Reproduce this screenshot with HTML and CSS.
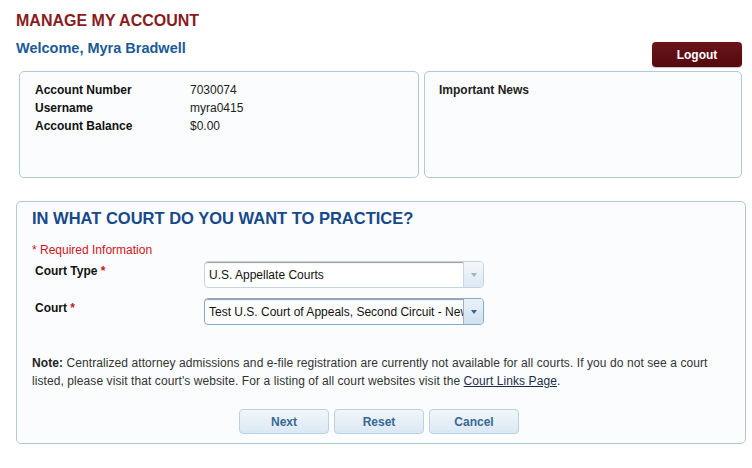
FILE: index.html
```html
<!DOCTYPE html>
<html lang="en">
<head>
<meta charset="utf-8">
<title>Manage My Account</title>
<link rel="stylesheet" href="styles.css">
</head>
<body>
<div class="page">
  <h1 class="title">MANAGE MY ACCOUNT</h1>
  <div class="welcome-row">
    <h2 class="welcome">Welcome, Myra Bradwell</h2>
    <button class="logout" type="button">Logout</button>
  </div>
  <div class="panels">
    <div class="panel account">
      <div class="info-row"><span class="info-label">Account Number</span><span class="info-value">7030074</span></div>
      <div class="info-row"><span class="info-label">Username</span><span class="info-value">myra0415</span></div>
      <div class="info-row"><span class="info-label">Account Balance</span><span class="info-value">$0.00</span></div>
    </div>
    <div class="panel news">
      <div class="news-title">Important News</div>
    </div>
  </div>
  <div class="court-box">
    <h2 class="court-heading">IN WHAT COURT DO YOU WANT TO PRACTICE?</h2>
    <div class="required">* Required Information</div>
    <div class="field-row">
      <label class="field-label">Court Type <span class="star">*</span></label>
      <div class="select disabled">
        <span class="select-text">U.S. Appellate Courts</span>
        <span class="select-btn"><span class="arrow"></span></span>
      </div>
    </div>
    <div class="field-row second">
      <label class="field-label">Court <span class="star">*</span></label>
      <div class="select active">
        <span class="select-text">Test U.S. Court of Appeals, Second Circuit - New York</span>
        <span class="select-btn"><span class="arrow"></span></span>
      </div>
    </div>
    <p class="note"><b>Note:</b> Centralized attorney admissions and e-file registration are currently not available for all courts. If you do not see a court listed, please visit that court's website. For a listing of all court websites visit the <a href="#" class="link">Court Links Page</a>.</p>
    <div class="actions">
      <button class="btn" type="button">Next</button>
      <button class="btn" type="button">Reset</button>
      <button class="btn" type="button">Cancel</button>
    </div>
  </div>
</div>
</body>
</html>
```
FILE: styles.css
```css
* { box-sizing: border-box; }
body {
  margin: 0;
  background: #ffffff;
  font-family: "Liberation Sans", Arial, sans-serif;
  color: #222;
}
.page {
  width: 752px;
  padding: 12px 6px 0 16px;
}
.title {
  margin: 0;
  font-size: 16px;
  line-height: 18px;
  font-weight: bold;
  color: #8a1b1d;
}
.welcome-row {
  display: flex;
  justify-content: space-between;
  align-items: flex-start;
  margin-top: 12px;
  padding-right: 4px;
}
.welcome {
  margin: -2px 0 0 0;
  font-size: 14.5px;
  line-height: 17px;
  font-weight: bold;
  color: #1b5a96;
}
.logout {
  width: 90px;
  height: 25px;
  border: 0;
  border-radius: 4px;
  background: linear-gradient(#6a1519, #55090e);
  box-shadow: 0 1px 1px rgba(0,0,0,0.25);
  color: #fff;
  font-family: "Liberation Sans", Arial, sans-serif;
  font-size: 12px;
  font-weight: bold;
  padding: 0;
}
.panels {
  display: flex;
  gap: 5px;
  margin: 4px 4px 0 3px;
}
.panel {
  height: 107px;
  border: 1px solid #afcad9;
  border-radius: 5px;
  background: #fafcfd;
  padding: 9px 15px;
  font-size: 12px;
  line-height: 18px;
}
.account { width: 400px; }
.news { flex: 1; padding-left: 14px; }
.info-row { display: flex; }
.info-label {
  width: 155px;
  font-weight: bold;
  color: #111;
}
.info-value { color: #222; }
.news-title { font-weight: bold; color: #222; }

.court-box {
  margin-top: 23px;
  border: 1px solid #afcad9;
  border-radius: 5px;
  background: #fbfcfd;
  padding: 6px 15px 9px 15px;
}
.court-heading {
  margin: 0;
  font-size: 16.5px;
  line-height: 20px;
  font-weight: bold;
  color: #17498a;
}
.required {
  margin-top: 13px;
  font-size: 12px;
  line-height: 18px;
  color: #d0141b;
}
.field-row {
  display: flex;
  margin-top: 2px;
}
.field-row.second { margin-top: 10px; }
.field-label {
  width: 172px;
  padding: 1px 0 0 3px;
  font-size: 12px;
  line-height: 18px;
  font-weight: bold;
  color: #111;
}
.star { color: #d0141b; }
.select {
  display: flex;
  width: 280px;
  height: 27px;
  border: 1px solid #c3d5e3;
  border-radius: 4px;
  background: #fff;
  overflow: hidden;
}
.select.active { border-color: #86aacb; }
.select-text {
  flex: 1;
  padding: 1px 0 0 4px;
  font-size: 12px;
  line-height: 24px;
  color: #111;
  white-space: nowrap;
  overflow: hidden;
  box-shadow: inset 0 2px 1px -1px #9a9a9a;
  border-radius: 3px 0 0 3px;
}
.select-btn {
  width: 20px;
  display: flex;
  align-items: center;
  justify-content: center;
  background: linear-gradient(#f3f7fb, #dde8f2);
  border-left: 1px solid #c7d7e5;
}
.select.active .select-btn {
  background: linear-gradient(#eaf2f9, #cfe0ef);
  border-left-color: #93b4d1;
}
.arrow {
  width: 0;
  height: 0;
  border-left: 3.5px solid transparent;
  border-right: 3.5px solid transparent;
  border-top: 4px solid #9ab4cc;
}
.select.active .arrow { border-top-color: #2f64a0; }
.note {
  margin: 29px 0 0 0;
  font-size: 12px;
  line-height: 18px;
  letter-spacing: 0.08px;
  color: #333;
}
.note b { color: #222; }
.link { color: #1d2c4c; text-decoration: underline; }
.actions {
  display: flex;
  justify-content: center;
  gap: 5px;
  margin-top: 19px;
  padding-right: 4px;
}
.btn {
  width: 90px;
  height: 25px;
  border: 1px solid #bcd2e4;
  border-radius: 4px;
  background: linear-gradient(#f1f6fb, #dae8f4);
  color: #3b6794;
  font-family: "Liberation Sans", Arial, sans-serif;
  font-size: 12px;
  font-weight: bold;
  padding: 0;
}
```
